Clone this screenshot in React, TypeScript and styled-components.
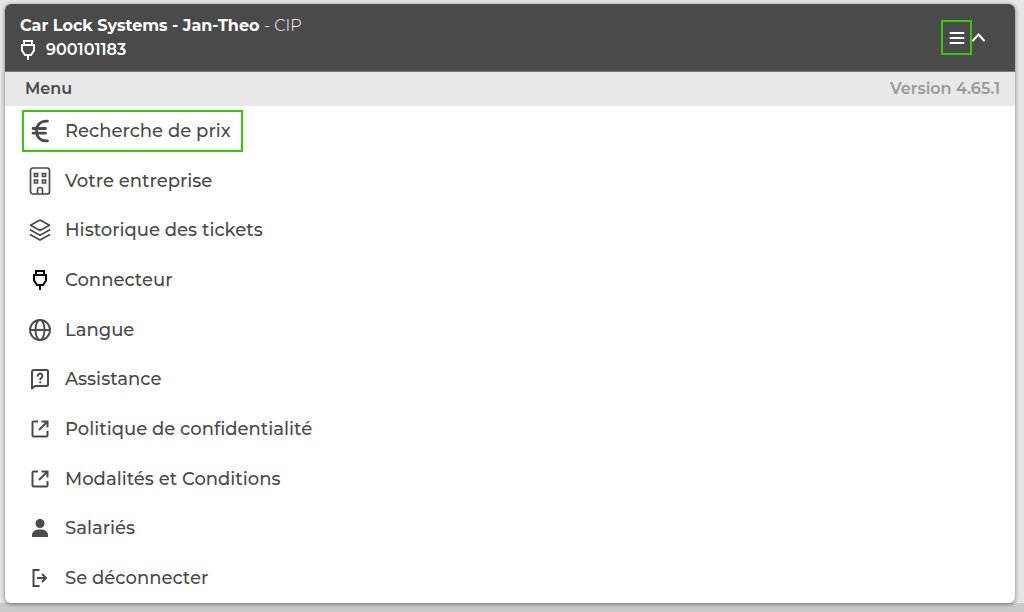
import React from "react";
import styled, { createGlobalStyle } from "styled-components";

const GlobalStyle = createGlobalStyle`
  *, *::before, *::after { box-sizing: border-box; }
  body {
    margin: 0;
    background: #e6e6e6;
    color: #4a4a4a;
    font-family: Montserrat, Inter, "Liberation Sans", sans-serif;
  }
`;

const Page = styled.div`
  display: flex;
  min-height: 100vh;
  padding: 4px 9px 9px 5px;
  background: linear-gradient(to top, #cbcbcb 9px, #e6e6e6 9px);
`;

const Card = styled.main`
  display: flex;
  flex: 1;
  flex-direction: column;
  overflow: hidden;
  border-radius: 6px;
  background: #fff;
  box-shadow: 0 1px 4px rgba(0, 0, 0, 0.5);
`;

const Header = styled.header`
  display: flex;
  align-items: center;
  justify-content: space-between;
  height: 68px;
  padding: 0 30px 0 15px;
  border-bottom: 1px solid #7c7878;
  background: #4a4a4a;
  color: #fff;
`;

const Title = styled.h1`
  margin: 0;
  font-size: 16px;
  line-height: 24px;
  font-weight: 700;
`;

const Role = styled.span`
  font-weight: 300;
`;

const Connection = styled.p`
  display: flex;
  align-items: center;
  gap: 10px;
  margin: 0;
  font-size: 16px;
  line-height: 24px;
  font-weight: 600;
`;

const HeaderActions = styled.div`
  display: flex;
  align-items: center;
`;

const IconButton = styled.button<{ $outlined?: boolean }>`
  display: flex;
  align-items: center;
  justify-content: center;
  width: ${(p) => (p.$outlined ? 31 : 13)}px;
  height: 35px;
  padding: 0;
  border: ${(p) => (p.$outlined ? "2px solid #35cb0b" : "none")};
  background: transparent;
  color: inherit;
  cursor: pointer;
`;

const SubHeader = styled.div`
  display: flex;
  align-items: center;
  justify-content: space-between;
  height: 34px;
  padding: 0 15px 2px 20px;
  background: #e8e8e8;
  font-size: 16px;
  font-weight: 600;
`;

const MenuTitle = styled.h2`
  margin: 0;
  font-size: 16px;
  font-weight: 600;
`;

const Version = styled.span`
  color: #999;
`;

const Nav = styled.nav`
  display: flex;
  flex: 1;
`;

const MenuList = styled.ul`
  display: grid;
  flex: 1;
  grid-auto-rows: 1fr;
  align-items: center;
  justify-items: start;
  margin: 0;
  padding: 0 17px;
  list-style: none;
`;

const MenuLink = styled.a<{ $active?: boolean }>`
  display: flex;
  align-items: center;
  gap: 13px;
  height: 42px;
  padding: 0 10px 0 4px;
  border: 2px solid ${(p) => (p.$active ? "#35cb0b" : "transparent")};
  color: #4a4a4a;
  font-size: 18px;
  line-height: 24px;
  font-weight: 500;
  text-decoration: none;
  white-space: nowrap;
`;

const Icon = styled.svg`
  display: block;
  flex: none;
  overflow: visible;
  fill: none;
  stroke: currentColor;
  stroke-width: 2;
`;

type GlyphProps = { size?: number; children: React.ReactNode };

const Glyph = ({ size = 24, children }: GlyphProps) => (
  <Icon width={size} height={size} viewBox="0 0 24 24" aria-hidden="true">
    {children}
  </Icon>
);

const plug = <path d="M8 7V3h8v4M5 7h14M6 7v5.500l3 4.500h6l3-4.500V7M12 17v5" />;

const external = (
  <path d="M10 4.500H5.500a1 1 0 0 0-1 1v13a1 1 0 0 0 1 1h13a1 1 0 0 0 1-1V14M13.500 4.500h6v6M19 5l-8 8" />
);

const items: { label: string; active?: boolean; icon: React.ReactNode }[] = [
  {
    label: "Recherche de prix",
    active: true,
    icon: (
      <path
        d="M19.500 2.200C12.500 1.500 8.500 6 8.500 12s4 10.500 11 9.800M5 9.500h12.500M5 14.200h12.500"
        strokeWidth="2.800"
        strokeLinecap="round"
      />
    ),
  },
  {
    label: "Votre entreprise",
    icon: (
      <g strokeWidth="1.700">
        <rect x="2.500" y="-1" width="19" height="26" rx="2.500" />
        <path d="M6.500 4.500h3v3h-3zM14.500 4.500h3v3h-3zM6.500 11h3v3h-3zM14.500 11h3v3h-3zM9.500 25v-4a2.500 2.500 0 0 1 5 0v4" />
      </g>
    ),
  },
  {
    label: "Historique des tickets",
    icon: (
      <path
        strokeWidth="1.700"
        strokeLinejoin="round"
        strokeLinecap="round"
        d="M12 2l9.500 5.200L12 12.400 2.500 7.200zM2.500 12l9.500 5.200 9.500-5.200M2.500 16.800L12 22l9.500-5.200"
      />
    ),
  },
  { label: "Connecteur", icon: <g stroke="#000">{plug}</g> },
  {
    label: "Langue",
    icon: (
      <g strokeWidth="1.900">
        <circle cx="12" cy="12" r="10" />
        <ellipse cx="12" cy="12" rx="4.500" ry="10" />
        <path d="M2 12h20" />
      </g>
    ),
  },
  {
    label: "Assistance",
    icon: (
      <g strokeWidth="2" strokeLinejoin="round" strokeLinecap="round">
        <path d="M4 21.500V5a2 2 0 0 1 2-2h12.500A1.500 1.500 0 0 1 20 4.500v13a1.500 1.500 0 0 1-1.500 1.500H7z" />
        <path d="M9.800 8.800a2.300 2.300 0 1 1 3.500 2c-.9.500-1.100.8-1.100 1.400M12.200 15.300v.1" />
      </g>
    ),
  },
  { label: "Politique de confidentialité", icon: external },
  { label: "Modalités et Conditions", icon: external },
  {
    label: "Salariés",
    icon: (
      <g fill="currentColor" stroke="none">
        <circle cx="12" cy="7.500" r="4.500" />
        <path d="M4 21v-2c0-3.500 3-5.500 8-5.500s8 2 8 5.500v2z" />
      </g>
    ),
  },
  {
    label: "Se déconnecter",
    icon: <path d="M11.500 4H5.500v16h6M9 12h9M14 8l4 4-4 4" />,
  },
];

export default function App() {
  return (
    <>
      <GlobalStyle />
      <Page>
        <Card>
          <Header>
            <div>
              <Title>
                Car Lock Systems - Jan-Theo <Role>- CIP</Role>
              </Title>
              <Connection>
                <Icon width={16} height={22} viewBox="4 1 16 22" aria-hidden="true">
                  {plug}
                </Icon>
                900101183
              </Connection>
            </div>
            <HeaderActions>
              <IconButton type="button" $outlined aria-label="Menu">
                <Icon width={16} height={16} viewBox="0 0 16 16" aria-hidden="true">
                  <path d="M1.500 3h13M1.500 8h13M1.500 13h13" strokeLinecap="round" />
                </Icon>
              </IconButton>
              <IconButton type="button" aria-label="Replier">
                <Icon width={13} height={10} viewBox="0 0 13 10" aria-hidden="true">
                  <path d="M1 7.500l5.500-6L12 7.500" strokeLinecap="round" />
                </Icon>
              </IconButton>
            </HeaderActions>
          </Header>
          <SubHeader>
            <MenuTitle>Menu</MenuTitle>
            <Version>Version 4.65.1</Version>
          </SubHeader>
          <Nav>
            <MenuList>
              {items.map(({ label, active, icon }) => (
                <li key={label}>
                  <MenuLink href="#" $active={active}>
                    <Glyph>{icon}</Glyph>
                    {label}
                  </MenuLink>
                </li>
              ))}
            </MenuList>
          </Nav>
        </Card>
      </Page>
    </>
  );
}
